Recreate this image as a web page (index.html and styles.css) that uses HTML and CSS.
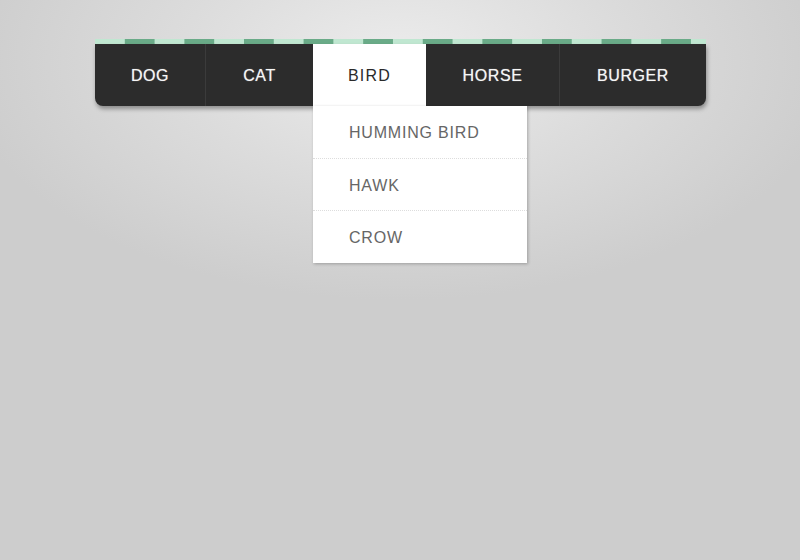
FILE: index.html
```html
<!DOCTYPE html>
<html>
<head>
<meta charset="utf-8">
<link rel="stylesheet" href="styles.css">
</head>
<body>
<div class="page">
  <nav class="nav">
    <div class="stripe"></div>
    <ul class="menu">
      <li class="item sep">DOG</li>
      <li class="item">CAT</li>
      <li class="item active">BIRD
        <ul class="dropdown">
          <li class="sub">HUMMING BIRD</li>
          <li class="sub">HAWK</li>
          <li class="sub">CROW</li>
        </ul>
      </li>
      <li class="item sep">HORSE</li>
      <li class="item">BURGER</li>
    </ul>
  </nav>
</div>
</body>
</html>
```
FILE: styles.css
```css
html, body {
  margin: 0;
  padding: 0;
  height: 100%;
}
body {
  background: radial-gradient(ellipse 440px 240px at 400px 60px, #ececec 0%, #dcdcdc 50%, #cdcdcd 100%), #cccccc;
  background-color: #cccccc;
  font-family: "Liberation Sans", Arial, sans-serif;
}
.page {
  padding-top: 39px;
  padding-left: 95px;
  display: flex;
}
.nav {
  width: 611px;
  display: flex;
  flex-direction: column;
}
.stripe {
  height: 5px;
  background-color: #c0e7d1;
  background-image: linear-gradient(90deg, #c0e7d1 0, #c0e7d1 30px, #6aab88 30px, #6aab88 59.6px);
  background-size: 59.6px 5px;
}
.menu {
  list-style: none;
  margin: 0;
  padding: 0;
  display: flex;
  height: 62px;
  background: #2c2c2c;
  border-radius: 0 0 8px 8px;
  box-shadow: 1px 3px 4px rgba(0,0,0,0.35);
}
.item {
  position: relative;
  display: flex;
  align-items: center;
  justify-content: center;
  box-sizing: border-box;
  padding-top: 2px;
  color: #f6f6f6;
  font-size: 16px;
  letter-spacing: 0.6px;
  text-shadow: 0 0 1px rgba(255,255,255,0.6);
}
.item:nth-child(1) { width: 111px; }
.item:nth-child(2) { width: 107px; }
.item:nth-child(3) { width: 113px; }
.item:nth-child(4) { width: 134px; }
.item:nth-child(5) { width: 146px; }
.item.sep {
  border-right: 1px solid #3b3b3b;
}
.item.active {
  background: #ffffff;
  color: #2a2a2a;
  text-shadow: none;
  letter-spacing: 1.2px;
}
.dropdown {
  position: absolute;
  top: 62px;
  left: 0;
  width: 214px;
  margin: 0;
  padding: 0;
  list-style: none;
  background: #ffffff;
  box-shadow: 1px 1px 3px rgba(0,0,0,0.25);
}
.sub {
  height: 52px;
  padding: 2px 0 0 36px;
  box-sizing: border-box;
  display: flex;
  align-items: center;
  color: #666666;
  font-size: 16px;
  letter-spacing: 0.8px;
  border-bottom: 1px dotted #dddddd;
}
.sub:first-child { height: 53px; }
.sub:last-child { border-bottom: none; }
```
